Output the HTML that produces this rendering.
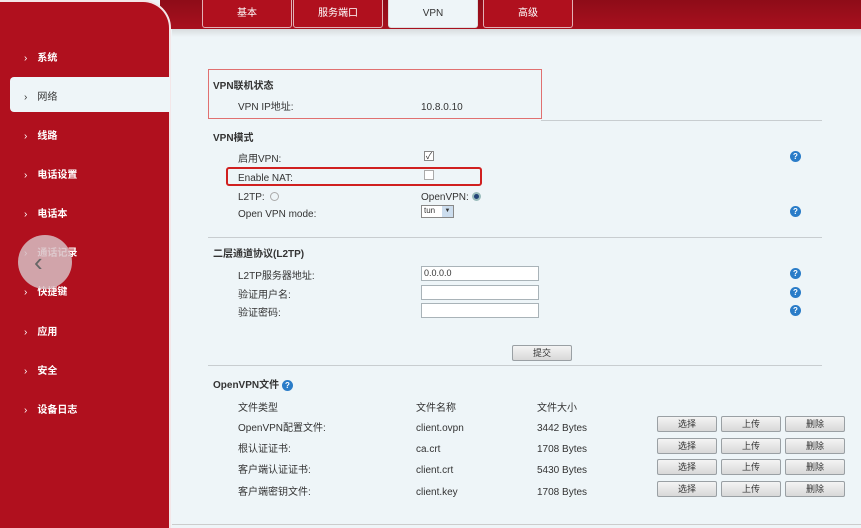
<!DOCTYPE html>
<html><head><meta charset="utf-8"><style>
*{margin:0;padding:0;box-sizing:border-box}
body{width:861px;height:528px;overflow:hidden;background:#eef5f8;font-family:"Liberation Sans","Noto Sans CJK SC",sans-serif;font-size:10px;color:#333;position:relative}
.a{position:absolute;white-space:nowrap;line-height:12px;margin-top:3px}
.b{position:absolute}
#side{position:absolute;left:0;top:0;width:171px;height:528px;background:#b0101e;border-top-right-radius:28px;border:2px solid #f3e6e8;border-left:none;border-bottom:none}
#top{position:absolute;left:160px;top:0;width:701px;height:29px;background:linear-gradient(#8e0c18,#a8101e)}
#shade{position:absolute;left:172px;top:29px;width:689px;height:8px;background:linear-gradient(#d8dcde,#eef5f8)}
.tab{position:absolute;top:0;height:28px;width:90px;background:#b0101e;border:1px solid #e3b0b5;border-top:none;border-radius:0 0 3px 3px;color:#fff;text-align:center;line-height:28px;font-size:10px}
.mi{position:absolute;left:24px;color:#fff;font-weight:bold;font-size:10px}
.mi:before{content:"›";margin-right:10px;font-weight:normal}
.h{font-weight:bold;color:#333;font-size:10px}
.hr{position:absolute;left:208px;width:614px;height:1px;background:#c8cdd0}
.inp{position:absolute;left:421px;width:118px;height:15px;background:#fff;border:1px solid #a9b3b8;font-size:9px;padding-left:2px;line-height:13px}
.q{position:absolute;left:790px;width:11px;height:11px;border-radius:50%;background:#2a7cc8;color:#fff;font-size:8px;font-weight:bold;text-align:center;line-height:11px}
.btn{position:absolute;width:60px;height:16px;background:linear-gradient(#f4f4f4,#d8d8d8);border:1px solid #9aa0a4;border-radius:2px;font-size:9px;text-align:center;line-height:14px;color:#333}
.cb{position:absolute;width:10px;height:10px;border:1px solid #888;background:#fff}
</style></head><body>
<div id="top"></div>
<div id="shade"></div>
<div id="side"></div>
<div class="tab" style="left:202px">基本</div>
<div class="tab" style="left:293px">服务端口</div>
<div class="tab" style="left:388px;background:#eef5f8;color:#333;border-color:#ddd">VPN</div>
<div class="tab" style="left:483px">高级</div>
<div class="mi a" style="top:50px">系统</div>
<div class="b" style="left:10px;top:77px;width:160px;height:35px;background:#eef5f8;border-radius:4px 0 0 4px"></div>
<div class="mi a" style="top:89px;color:#333;font-weight:normal">网络</div>
<div class="mi a" style="top:128px">线路</div>
<div class="mi a" style="top:167px">电话设置</div>
<div class="mi a" style="top:206px">电话本</div>
<div class="mi a" style="top:245px">通话记录</div>
<div class="mi a" style="top:284px">快捷键</div>
<div class="mi a" style="top:324px">应用</div>
<div class="mi a" style="top:363px">安全</div>
<div class="mi a" style="top:402px">设备日志</div>
<div class="b" style="left:18px;top:235px;width:54px;height:54px;border-radius:50%;background:rgba(215,190,195,.85)"></div>
<div class="b" style="left:34px;top:249px;font-size:26px;line-height:26px;color:#666;font-weight:100">‹</div>

<div class="b" style="left:208px;top:69px;width:334px;height:50px;border:1.5px solid #e07070"></div>
<div class="a h" style="left:213px;top:78px">VPN联机状态</div>
<div class="a" style="left:238px;top:99px">VPN IP地址:</div>
<div class="a" style="left:421px;top:99px">10.8.0.10</div>
<div class="hr" style="top:120px;left:541px;width:281px"></div>
<div class="a h" style="left:213px;top:130px">VPN模式</div>
<div class="a" style="left:238px;top:151px">启用VPN:</div>
<div class="cb" style="left:424px;top:151px;font-size:9px;line-height:8px;text-align:center">✓</div>
<div class="q" style="top:151px">?</div>
<div class="b" style="left:226px;top:167px;width:256px;height:19px;border:2.5px solid #d02020;border-radius:3px"></div>
<div class="a" style="left:238px;top:170px">Enable NAT:</div>
<div class="cb" style="left:424px;top:170px;border-color:#aaa"></div>
<div class="a" style="left:238px;top:189px">L2TP: <span style="display:inline-block;width:9px;height:9px;border:1px solid #aaa;border-radius:50%;vertical-align:-1px;margin-left:3px"></span></div>
<div class="a" style="left:421px;top:189px">OpenVPN: <span style="display:inline-block;width:9px;height:9px;border:2px solid #9bb;border-radius:50%;background:#247;vertical-align:-1px"></span></div>
<div class="a" style="left:238px;top:206px">Open VPN mode:</div>
<div class="b" style="left:421px;top:205px;width:33px;height:13px;border:1px solid #888;background:#fff;font-size:8px;padding-left:2px">tun<span style="position:absolute;right:0;top:0;width:11px;height:11px;background:#cde;font-size:6px;text-align:center;line-height:11px">▼</span></div>
<div class="q" style="top:206px">?</div>
<div class="hr" style="top:237px"></div>
<div class="a h" style="left:213px;top:246px">二层通道协议(L2TP)</div>
<div class="a" style="left:238px;top:268px">L2TP服务器地址:</div>
<div class="inp" style="top:266px">0.0.0.0</div>
<div class="q" style="top:268px">?</div>
<div class="a" style="left:238px;top:287px">验证用户名:</div>
<div class="inp" style="top:285px"></div>
<div class="q" style="top:287px">?</div>
<div class="a" style="left:238px;top:305px">验证密码:</div>
<div class="inp" style="top:303px"></div>
<div class="q" style="top:305px">?</div>
<div class="btn" style="left:512px;top:345px">提交</div>
<div class="hr" style="top:365px"></div>
<div class="a h" style="left:213px;top:377px">OpenVPN文件 <span style="display:inline-block;width:11px;height:11px;border-radius:50%;background:#2a7cc8;color:#fff;font-size:8px;text-align:center;line-height:11px">?</span></div>
<div class="a" style="left:238px;top:400px">文件类型</div>
<div class="a" style="left:416px;top:400px">文件名称</div>
<div class="a" style="left:537px;top:400px">文件大小</div>
<div class="a" style="left:238px;top:420px">OpenVPN配置文件:</div>
<div class="a" style="left:416px;top:420px">client.ovpn</div>
<div class="a" style="left:537px;top:420px">3442 Bytes</div>
<div class="a" style="left:238px;top:441px">根认证证书:</div>
<div class="a" style="left:416px;top:441px">ca.crt</div>
<div class="a" style="left:537px;top:441px">1708 Bytes</div>
<div class="a" style="left:238px;top:462px">客户端认证证书:</div>
<div class="a" style="left:416px;top:462px">client.crt</div>
<div class="a" style="left:537px;top:462px">5430 Bytes</div>
<div class="a" style="left:238px;top:484px">客户端密钥文件:</div>
<div class="a" style="left:416px;top:484px">client.key</div>
<div class="a" style="left:537px;top:484px">1708 Bytes</div>
<div class="btn" style="left:657px;top:416px">选择</div><div class="btn" style="left:721px;top:416px">上传</div><div class="btn" style="left:785px;top:416px">删除</div>
<div class="btn" style="left:657px;top:438px">选择</div><div class="btn" style="left:721px;top:438px">上传</div><div class="btn" style="left:785px;top:438px">删除</div>
<div class="btn" style="left:657px;top:459px">选择</div><div class="btn" style="left:721px;top:459px">上传</div><div class="btn" style="left:785px;top:459px">删除</div>
<div class="btn" style="left:657px;top:481px">选择</div><div class="btn" style="left:721px;top:481px">上传</div><div class="btn" style="left:785px;top:481px">删除</div>
<div class="b" style="left:172px;top:524px;width:689px;height:1px;background:#ccc"></div>
</body></html>
